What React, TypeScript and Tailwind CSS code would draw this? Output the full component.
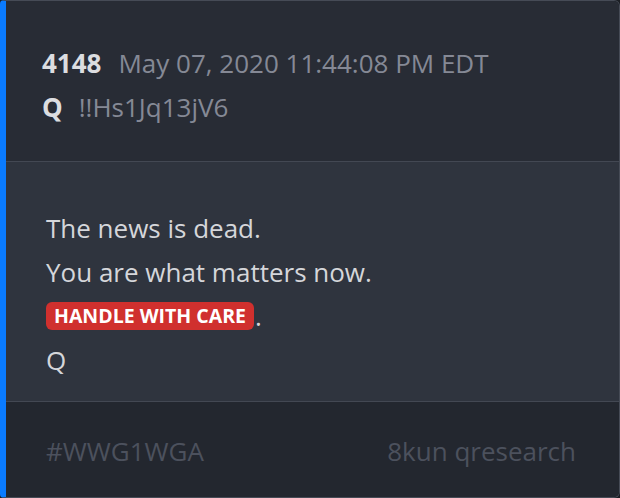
import React from 'react';

const font = { fontFamily: '"Open Sans", "Noto Sans", sans-serif' };

export default function App() {
  return (
    <div className="w-[620px] h-[498px] bg-[#1b1e24]" style={font}>
      <div className="flex flex-col h-full border border-[#464b56] border-l-[6px] border-l-[#0a7bff] rounded-r-md rounded-l-sm overflow-hidden">
        <div className="bg-[#282c35] h-[161px] px-[36px] pt-[40px] border-b border-[#434853]">
          <div className="flex items-baseline h-[44px] text-[26px] leading-[44px]">
            <span className="font-bold text-[#dcdde0]">4148</span>
            <span className="ml-[17px] text-[#858995]">May 07, 2020 11:44:08 PM EDT</span>
          </div>
          <div className="flex items-baseline h-[44px] text-[26px] leading-[44px]">
            <span className="font-bold text-[#dcdde0]">Q</span>
            <span className="ml-[16px] text-[#858995]">!!Hs1Jq13jV6</span>
          </div>
        </div>
        <div className="bg-[#2f343e] h-[240px] px-[40px] pt-[44px] border-b border-[#434853] text-[26px] leading-[44px] text-[#d5d6da]">
          <p>The news is dead.</p>
          <p>You are what matters now.</p>
          <p className="flex items-center h-[44px]">
            <span className="bg-[#d0302e] text-white font-bold text-[19.5px] leading-[28px] px-[8px] rounded-[6px]">
              HANDLE WITH CARE
            </span>
            <span className="ml-[1px]">.</span>
          </p>
          <p>Q</p>
        </div>
        <div className="flex-1 bg-[#23272f] pl-[40px] pr-[43px] pt-[4px] flex items-center justify-between text-[26px] text-[#4c515d]">
          <span>#WWG1WGA</span>
          <span>8kun qresearch</span>
        </div>
      </div>
    </div>
  );
}
